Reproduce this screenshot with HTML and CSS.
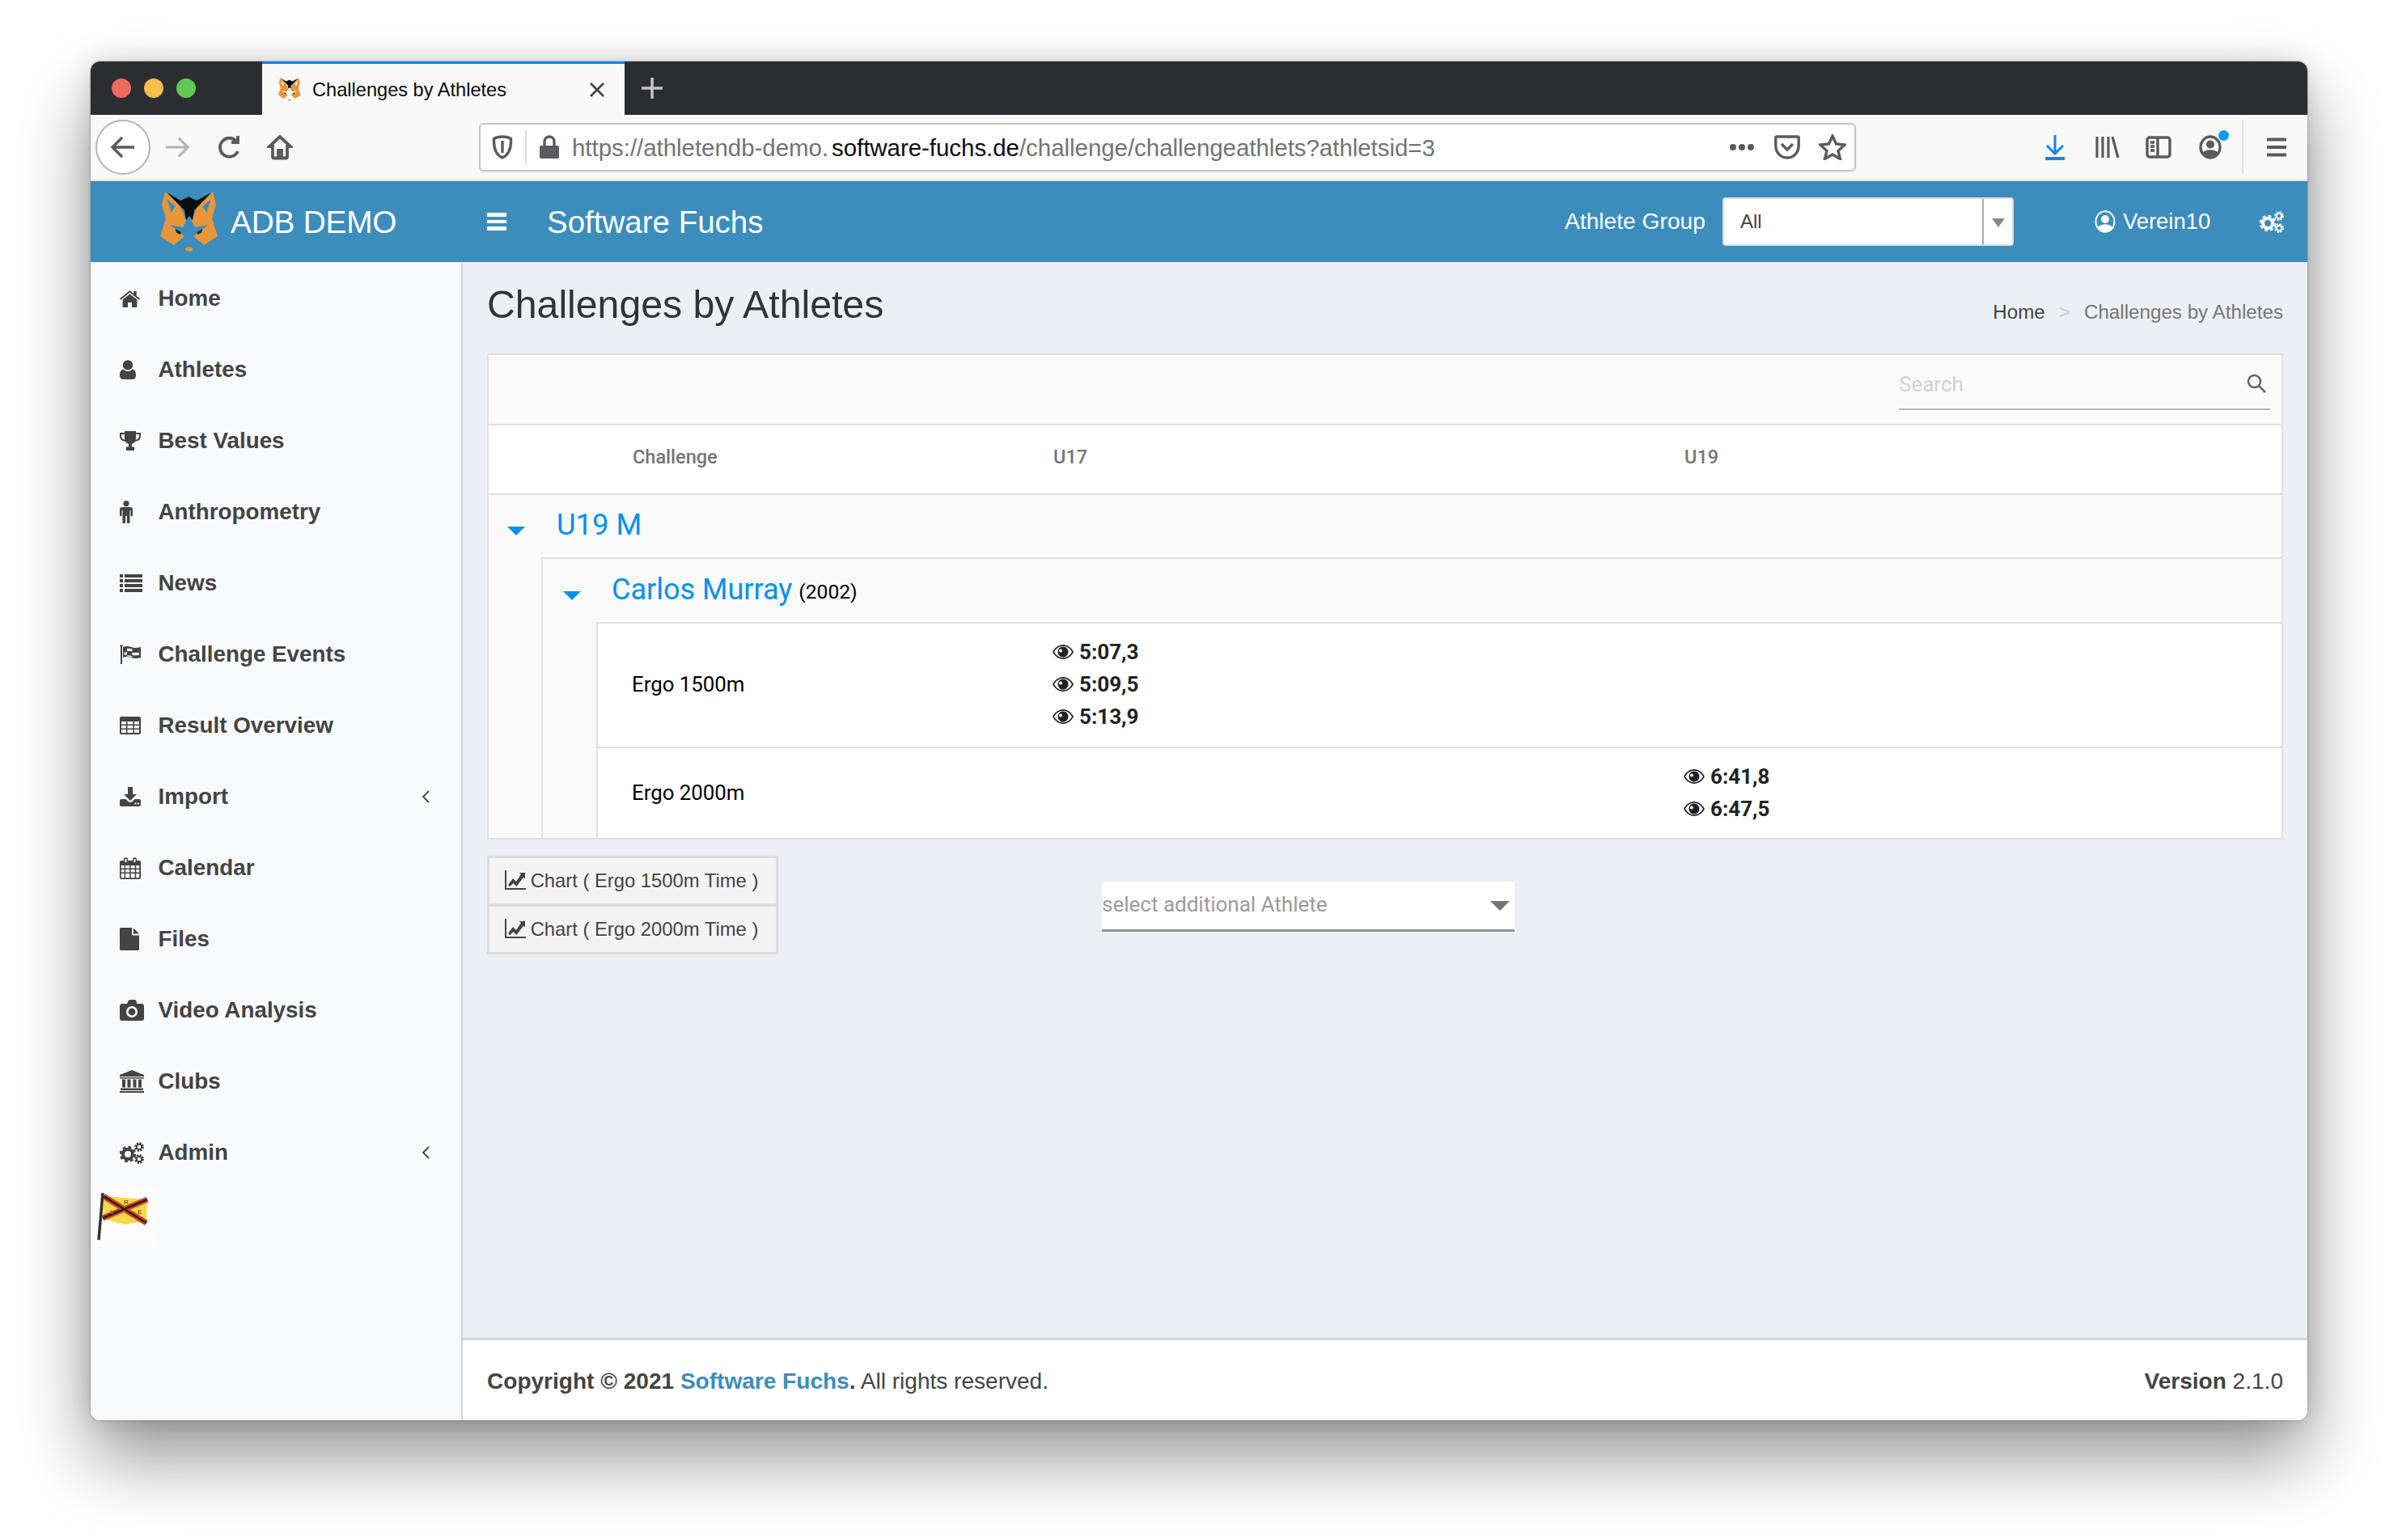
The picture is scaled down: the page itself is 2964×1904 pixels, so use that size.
FILE: index.html
```html
<!DOCTYPE html>
<html lang="en">
<head>
<meta charset="utf-8">
<title>Challenges by Athletes</title>
<link rel="stylesheet" href="styles.css">
</head>
<body>
<svg class="sprite" xmlns="http://www.w3.org/2000/svg">
  <symbol id="i-fox" viewBox="0 0 72 76">
    <path fill="#e8963a" fill-rule="evenodd" d="M6 0 L25 18 L32 36 L28 44 L12 41 L30 55 L17 66 L0 55 L7 33 L2 16Z M8.700 9.700 L13.700 26 L18.700 18Z"/>
    <path fill="#e8963a" fill-rule="evenodd" d="M65 0 L46 18 L39 36 L43 44 L59 41 L41 55 L54 66 L71 55 L64 33 L69 16Z M62.300 9.700 L57.300 26 L52.300 18Z"/>
    <path fill="#0c0c0c" d="M8.700 1.300 L25 11 L35.300 6.300 L45 11 L63 1.300 L42 23 L40 35 L36 30 L32 35 L30 23Z"/>
    <path fill="#12283a" d="M18.500 46 L26 50 L24.500 53 L20 50.500Z M52.500 46 L45 50 L46.500 53 L51 50.500Z"/>
    <ellipse cx="35.500" cy="71" rx="4.500" ry="2.600" fill="#e8963a"/>
  </symbol>
  <symbol id="i-home" viewBox="0 0 25 21">
    <path d="M12.5 0 L0 10.2 l1.3 1.5 L12.5 2.6 l11.2 9.1 1.3-1.5 -4.3-3.5V1h-3.4v2.9z"/>
    <path d="M12.5 4.4 L3.6 11.6V21h6.4v-6h5v6h6.4v-9.4z"/>
  </symbol>
  <symbol id="i-user" viewBox="0 0 20 24">
    <circle cx="10" cy="6.4" r="6.2"/>
    <path d="M4.6 11.4 C6 13 8 14 10 14 s4-1 5.4-2.6 C18.400 11.8 20 14.500 20 19 c0 3.300-1.800 5-4 5 H4 C1.800 24 0 22.300 0 19 0 14.500 1.600 11.800 4.600 11.400z"/>
  </symbol>
  <symbol id="i-trophy" viewBox="0 0 26 24">
    <path d="M6 0h14v9c0 3.600-2.200 6-5 7v3.500h3V24H8v-4.500h3V16c-2.800-1-5-3.400-5-7z"/>
    <path fill="none" stroke="currentColor" stroke-width="2" d="M6 3H1v3c0 3 2.500 5.500 6.500 6 M20 3h5v3c0 3-2.500 5.500-6.500 6"/>
  </symbol>
  <symbol id="i-male" viewBox="0 0 16 28">
    <circle cx="8" cy="3.600" r="3.600"/>
    <path d="M3 8h10c1.700 0 3 1.300 3 3v7c0 1.800-2.500 1.800-2.500 0v-6H12.500v15c0 1.800-3.600 1.800-3.600 0V19H7.100v8c0 1.800-3.600 1.800-3.600 0V12H2.500v6c0 1.800-2.500 1.800-2.500 0v-7c0-1.700 1.300-3 3-3z"/>
  </symbol>
  <symbol id="i-list" viewBox="0 0 28 22">
    <path d="M0 0h4v4H0zM6 0h22v4H6zM0 6h4v4H0zM6 6h22v4H6zM0 12h4v4H0zM6 12h22v4H6zM0 18h4v4H0zM6 18h22v4H6z"/>
  </symbol>
  <symbol id="i-flag" viewBox="0 0 27 24">
    <circle cx="2" cy="1.600" r="1.600"/>
    <rect x="1" y="1" width="2" height="23"/>
    <path d="M4 3 Q9 1 14 3 T26 3 V16 Q20 18 14 16 T4 16Z"/>
    <path fill="#f9fafc" d="M9 5 Q12 4.500 15.500 5.500 V8.500 Q12 7.500 9 8z M5.500 9.500 Q7 9 9 9.200 V12.500 Q7 12.300 5.500 12.800z M15.500 9.700 Q20 10.500 24 9.500 V12.800 Q20 13.800 15.500 13z M9 13.400 Q12 13.200 15.500 14.200 V15.400 Q12 14.400 9 14.800z"/>
  </symbol>
  <symbol id="i-table" viewBox="0 0 26 22">
    <path fill-rule="evenodd" d="M2 0h22c1.100 0 2 .9 2 2v18c0 1.100-.9 2-2 2H2c-1.100 0-2-.9-2-2V2C0 .9.900 0 2 0z M2 6v3.500h6V6z M9.500 6v3.500h7V6z M18 6v3.500h6V6z M2 11v3.500h6V11z M9.500 11v3.500h7V11z M18 11v3.500h6V11z M2 16v4h6v-4z M9.500 16v4h7v-4z M18 16v4h6v-4z"/>
  </symbol>
  <symbol id="i-import" viewBox="0 0 26 24">
    <path d="M10 0h6v9h5l-8 8-8-8h5z"/>
    <path fill-rule="evenodd" d="M2 15h5.500l3 3c1.500 1.300 3.500 1.300 5 0l3-3H24c1.100 0 2 .9 2 2v5c0 1.100-.9 2-2 2H2c-1.100 0-2-.9-2-2v-5c0-1.100.9-2 2-2z M18.500 19.500v2h2v-2z M22 19.500v2h2v-2z"/>
  </symbol>
  <symbol id="i-cal" viewBox="0 0 26 27">
    <path fill-rule="evenodd" d="M2 4h3V2c0-2.500 5-2.500 5 0v2h6V2c0-2.500 5-2.500 5 0v2h3c1.100 0 2 .9 2 2v19c0 1.100-.9 2-2 2H2c-1.100 0-2-.9-2-2V6c0-1.100.9-2 2-2z M6.500 2v4h2V2z M17.500 2v4h2V2z M1.700 10v3.500h4V10z M7 10v3.500h5.200V10z M13.700 10v3.500h5V10z M20.200 10v3.500h4V10z M1.700 15v3.500h4V15z M7 15v3.500h5.200V15z M13.700 15v3.500h5V15z M20.200 15v3.500h4V15z M1.700 20v5.200h4V20z M7 20v5.200h5.200V20z M13.700 20v5.200h5V20z M20.200 20v5.200h4V20z"/>
  </symbol>
  <symbol id="i-file" viewBox="0 0 24 28">
    <path d="M1.500 0H15v8c0 .8.700 1.500 1.500 1.500H24V26.500c0 .8-.7 1.500-1.500 1.500H1.500C.7 28 0 27.300 0 26.500V1.500C0 .7.700 0 1.500 0z M17 0.500l7 7h-7z"/>
  </symbol>
  <symbol id="i-cam" viewBox="0 0 30 26">
    <path fill-rule="evenodd" d="M3 5h6l1.300-3c.5-1 1.200-2 2.700-2h5c1.500 0 2.200 1 2.700 2L21 5h6c1.700 0 3 1.300 3 3v15c0 1.700-1.300 3-3 3H3c-1.700 0-3-1.300-3-3V8c0-1.700 1.300-3 3-3z M15 8a7 7 0 1 0 .01 0z"/>
    <circle cx="15" cy="15" r="4.400"/>
  </symbol>
  <symbol id="i-bank" viewBox="0 0 30 28">
    <path d="M15 0L30 6v2H0V6z M0 9h30v1.500H0z M3 11.500h4v10H3z M9.500 11.500h4v10h-4z M16.500 11.500h4v10h-4z M23 11.500h4v10h-4z M1 22.500h28V25H1z M0 26h30v2H0z"/>
  </symbol>
  <symbol id="i-gears" viewBox="0 0 30 27">
    <g fill="none" stroke="currentColor">
      <circle cx="10" cy="15" r="6" stroke-width="4"/>
      <circle cx="10" cy="15" r="8.500" stroke-width="3.600" stroke-dasharray="3.700 3"/>
      <circle cx="24" cy="6" r="3.200" stroke-width="2"/>
      <circle cx="24" cy="6" r="4.800" stroke-width="2.200" stroke-dasharray="2.200 1.570"/>
      <circle cx="24" cy="21" r="3.200" stroke-width="2"/>
      <circle cx="24" cy="21" r="4.800" stroke-width="2.200" stroke-dasharray="2.200 1.570"/>
    </g>
  </symbol>
  <symbol id="i-eye" viewBox="0 0 26 20">
    <path fill-rule="evenodd" d="M13 1C7.500 1 3 4.500 0 10c3 5.500 7.500 9 13 9s10-3.500 13-9c-3-5.500-7.500-9-13-9z M13 2.700c-5 0-8.500 3-11 7.300 2.500 4.300 6 7.300 11 7.300s8.500-3 11-7.300c-2.500-4.300-6-7.300-11-7.300z"/>
    <path fill-rule="evenodd" d="M13 3.500a6.500 6.500 0 1 0 .01 0z M10 6.500a2 2 0 1 0 .01 0z"/>
  </symbol>
  <symbol id="i-chart" viewBox="0 0 26 24">
    <path d="M0 0h2v22h24v2H0z"/>
    <path d="M4 18l6-8 4 4 6-9-2.500-2H25v7.500l-2-2-8.500 11.500-4-4L6 20z"/>
  </symbol>
</svg>

<div class="window">
  <div class="tabstrip">
    <div class="lights">
      <span class="light red"></span><span class="light yellow"></span><span class="light green"></span>
    </div>
    <div class="tab">
      <svg class="tab-fav"><use href="#i-fox"/></svg>
      <span class="tab-title">Challenges by Athletes</span>
      <svg class="tab-close" viewBox="0 0 20 20"><path d="M2 2l16 16M18 2L2 18"/></svg>
    </div>
    <svg class="tab-new" viewBox="0 0 28 28"><path d="M14 1v26M1 14h26"/></svg>
  </div>

  <div class="navbar">
    <div class="nav-back">
      <svg class="nav-ic" viewBox="0 0 36 36"><path d="M32 18H6M17 6L5 18l12 12"/></svg>
    </div>
    <svg class="nav-ic fwd" viewBox="0 0 36 36"><path d="M3 18h28M20 6l12 12-12 12"/></svg>
    <svg class="nav-ic reload" viewBox="0 0 32 32"><path d="M26 21a11.500 11.500 0 1 1-2-12.500M26 2v8h-8"/></svg>
    <svg class="nav-ic house" viewBox="0 0 32 32"><path d="M16 3L3 15h4v13c0 1 .5 1.500 1.500 1.500h15c1 0 1.500-.5 1.500-1.500V15h4z M14 29.500V20h4v9.500"/></svg>
    <div class="urlbar">
      <svg class="url-shield" viewBox="0 0 26 30"><path d="M13 2C9 2 5 3 2.500 4.500 2 14 4 24 13 28c9-4 11-14 10.500-23.500C21 3 17 2 13 2z"/><path d="M13 7v15"/></svg>
      <span class="url-sep"></span>
      <svg class="url-lock" viewBox="0 0 26 30"><path class="solid" d="M3 13h20c1.200 0 2 .8 2 2v12c0 1.200-.8 2-2 2H3c-1.200 0-2-.8-2-2V15c0-1.200.8-2 2-2z"/><path d="M7 13V8c0-8 12-8 12 0v5"/></svg>
      <span class="url-text">https://athletendb-demo.<b>software-fuchs.de</b>/challenge/challengeathlets?athletsid=3</span>
      <span class="url-dots"><i></i><i></i><i></i></span>
      <svg class="url-pocket" viewBox="0 0 32 30"><path d="M3 2h26c.8 0 1.200.5 1.200 1.200V13C30 22 24 28 16 28S2 22 1.800 13V3.200C1.800 2.500 2.200 2 3 2z"/><path d="M9 11l7 7 7-7"/></svg>
      <svg class="url-star" viewBox="0 0 34 32"><path d="M17 2l4.500 10 10.500 1-8 7.500 2.500 10L17 25l-9.500 5.500 2.500-10L2 13l10.500-1z"/></svg>
    </div>
    <svg class="tb-ic dl" viewBox="0 0 24 32"><path d="M12 1v22M2 14l10 10 10-10"/><path class="bar" d="M0 30h24"/></svg>
    <svg class="tb-ic lib" viewBox="0 0 30 30"><path d="M2 2v26M9 2v26M16 2v26M21 2l7 26"/></svg>
    <svg class="tb-ic side" viewBox="0 0 32 28"><rect x="2" y="2" width="28" height="24" rx="3"/><path d="M15 2v24M6 8h5M6 13h5M6 18h5"/></svg>
    <div class="tb-account">
      <svg class="tb-ic acc" viewBox="0 0 28 30"><ellipse cx="14" cy="15" rx="12" ry="13"/><circle class="solid" cx="14" cy="11.500" r="5"/><path class="solid" d="M5 22c2-5 16-5 18 0-4 6-14 6-18 0z"/></svg>
      <span class="tb-dot"></span>
    </div>
    <span class="tb-div"></span>
    <svg class="tb-ic burger" viewBox="0 0 24 24"><path d="M1 2.500h22M1 12h22M1 21.500h22"/></svg>
  </div>

  <header class="appbar">
    <svg class="app-logo"><use href="#i-fox"/></svg>
    <span class="app-name">ADB DEMO</span>
    <span class="app-burger"><i></i><i></i><i></i></span>
    <span class="app-org">Software Fuchs</span>
    <span class="app-label">Athlete Group</span>
    <div class="app-select">
      <span class="app-select-val">All</span>
      <span class="app-select-btn"></span>
    </div>
    <svg class="app-user-ic" viewBox="0 0 26 28"><ellipse cx="13" cy="14" rx="11.500" ry="12.800" fill="none" stroke="#fff" stroke-width="2"/><circle cx="13" cy="11" r="5" fill="#fff"/><path d="M4 21c3-5 15-5 18 0-4 7-14 7-18 0z" fill="#fff"/></svg>
    <span class="app-user">Verein10</span>
    <svg class="app-gears"><use href="#i-gears"/></svg>
  </header>

  <div class="body-row">
    <aside class="sidebar">
      <a class="side-item"><span class="side-ic"><svg width="25" height="21"><use href="#i-home"/></svg></span>Home</a>
      <a class="side-item"><span class="side-ic"><svg width="20" height="24"><use href="#i-user"/></svg></span>Athletes</a>
      <a class="side-item"><span class="side-ic"><svg width="26" height="24"><use href="#i-trophy"/></svg></span>Best Values</a>
      <a class="side-item"><span class="side-ic"><svg width="16" height="28"><use href="#i-male"/></svg></span>Anthropometry</a>
      <a class="side-item"><span class="side-ic"><svg width="28" height="22"><use href="#i-list"/></svg></span>News</a>
      <a class="side-item"><span class="side-ic"><svg width="27" height="24"><use href="#i-flag"/></svg></span>Challenge Events</a>
      <a class="side-item"><span class="side-ic"><svg width="26" height="22"><use href="#i-table"/></svg></span>Result Overview</a>
      <a class="side-item"><span class="side-ic"><svg width="26" height="24"><use href="#i-import"/></svg></span>Import<svg class="side-chev" viewBox="0 0 10 16"><path d="M9 1L2 8l7 7"/></svg></a>
      <a class="side-item"><span class="side-ic"><svg width="26" height="27"><use href="#i-cal"/></svg></span>Calendar</a>
      <a class="side-item"><span class="side-ic"><svg width="24" height="28"><use href="#i-file"/></svg></span>Files</a>
      <a class="side-item"><span class="side-ic"><svg width="30" height="26"><use href="#i-cam"/></svg></span>Video Analysis</a>
      <a class="side-item"><span class="side-ic"><svg width="30" height="28"><use href="#i-bank"/></svg></span>Clubs</a>
      <a class="side-item"><span class="side-ic"><svg width="30" height="27"><use href="#i-gears"/></svg></span>Admin<svg class="side-chev" viewBox="0 0 10 16"><path d="M9 1L2 8l7 7"/></svg></a>
      <svg class="club-flag" viewBox="0 0 77 73">
        <rect width="77" height="73" fill="#fdfdfe"/>
        <path d="M13 11 L67 15 L66 44 Q52 42 40 46 Q25 43 12 38z" fill="#f7d94a"/>
        <path d="M13 11L66 44" stroke="#d8401f" stroke-width="7" fill="none"/>
        <path d="M67 15L12 38" stroke="#d8401f" stroke-width="7" fill="none"/>
        <path d="M13 11L66 44M67 15L12 38" stroke="#222" stroke-width="2.500" fill="none"/>
        <path d="M12 7L7 65" stroke="#333" stroke-width="3.500" fill="none"/>
        <text class="flag-t" x="21" y="33">V</text><text class="flag-t" x="38" y="21">R</text><text class="flag-t" x="55" y="33">E</text>
      </svg>
    </aside>

    <main class="main">
      <div class="content">
        <div class="page-head">
          <h1 class="page-title">Challenges by Athletes</h1>
          <nav class="crumbs"><a>Home</a><span class="crumb-sep">&gt;</span><span class="crumb-cur">Challenges by Athletes</span></nav>
        </div>

        <section class="card">
          <div class="toolbar">
            <div class="search">
              <span class="search-ph">Search</span>
              <svg class="search-ic" viewBox="0 0 24 24"><circle cx="9.500" cy="9.500" r="7.500"/><path d="M15 15l8 8"/></svg>
            </div>
          </div>
          <div class="tr thead">
            <span>Challenge</span><span>U17</span><span>U19</span>
          </div>
          <div class="group">
            <div class="group-head">
              <span class="caret"></span><span class="group-name">U19 M</span>
            </div>
            <div class="nest">
              <div class="group-head inner">
                <span class="caret"></span><span class="group-name">Carlos Murray</span><span class="birth">(2002)</span>
              </div>
              <div class="nest inner-nest">
                <div class="tr row tall">
                  <span>Ergo 1500m</span>
                  <div class="results">
                    <div class="res"><svg width="26" height="20"><use href="#i-eye"/></svg>5:07,3</div>
                    <div class="res"><svg width="26" height="20"><use href="#i-eye"/></svg>5:09,5</div>
                    <div class="res"><svg width="26" height="20"><use href="#i-eye"/></svg>5:13,9</div>
                  </div>
                  <span></span>
                </div>
                <div class="tr row">
                  <span>Ergo 2000m</span>
                  <span></span>
                  <div class="results">
                    <div class="res"><svg width="26" height="20"><use href="#i-eye"/></svg>6:41,8</div>
                    <div class="res"><svg width="26" height="20"><use href="#i-eye"/></svg>6:47,5</div>
                  </div>
                </div>
              </div>
            </div>
          </div>
        </section>

        <div class="under">
          <div class="chart-btns">
            <a class="chart-btn"><svg width="26" height="24"><use href="#i-chart"/></svg>Chart ( Ergo 1500m Time )</a>
            <a class="chart-btn"><svg width="26" height="24"><use href="#i-chart"/></svg>Chart ( Ergo 2000m Time )</a>
          </div>
          <div class="athlete-select">
            <span class="athlete-ph">select additional Athlete</span>
            <span class="athlete-arrow"></span>
          </div>
        </div>
      </div>

      <footer class="footer">
        <span><b>Copyright &copy; 2021 <a class="foot-link">Software Fuchs</a>.</b> All rights reserved.</span>
        <span><b>Version</b> 2.1.0</span>
      </footer>
    </main>
  </div>
</div>
</body>
</html>
```
FILE: styles.css
```css
* { box-sizing: border-box; }
html, body { margin: 0; height: 100%; }
body {
  width: 2964px;
  height: 1904px;
  padding: 76px 0 0 112px;
  background: #fff;
  overflow: hidden;
  font-family: "Liberation Sans", Arial, sans-serif;
  color: #333;
}
.sprite { display: none; }
svg { display: block; flex: none; }
a { color: inherit; text-decoration: none; }

.window {
  width: 2740px;
  height: 1680px;
  border-radius: 12px;
  overflow: hidden;
  display: flex;
  flex-direction: column;
  box-shadow: 0 46px 90px rgba(0,0,0,.42), 0 0 30px rgba(0,0,0,.14), 0 0 2px rgba(0,0,0,.5);
}

/* tab strip */
.tabstrip {
  height: 66px;
  background: #2c2d31;
  display: flex;
  align-items: stretch;
  flex: none;
}
.lights { width: 212px; display: flex; align-items: center; padding-left: 26px; gap: 16px; padding-top: 0; }
.light { width: 24px; height: 24px; border-radius: 50%; }
.red { background: #ee6a5f; }
.yellow { background: #f5be4f; }
.green { background: #62c554; }
.tab {
  width: 448px;
  background: #f9f9fa;
  border-top: 3px solid #0a84ff;
  display: flex;
  align-items: center;
  padding-left: 20px;
  color: #0c0c0d;
}
.tab-fav { width: 28px; height: 30px; margin-right: 14px; }
.tab-title { font-size: 23.600px; flex: 1; padding-top: 2px; }
.tab-close { width: 20px; height: 20px; margin-right: 24px; fill: none; stroke: #444; stroke-width: 2.600; }
.tab-new { width: 28px; height: 28px; margin: 19px 0 0 20px; fill: none; stroke: #c6c6c8; stroke-width: 3.500; }

/* browser nav */
.navbar {
  height: 82px;
  background: #f9f9fa;
  border-bottom: 2px solid #e2e2e2;
  display: flex;
  align-items: center;
  flex: none;
  padding-left: 6px;
}
.nav-ic { fill: none; stroke: #5b5b5e; stroke-width: 3.400; }
.nav-back {
  width: 68px;
  height: 68px;
  border-radius: 50%;
  border: 2px solid #b4b4b4;
  background: #fff;
  display: flex;
  align-items: center;
  justify-content: center;
}
.nav-back .nav-ic { width: 36px; height: 36px; }
.fwd { width: 34px; height: 34px; margin-left: 16px; stroke: #b5b5b7; }
.reload { width: 32px; height: 32px; margin-left: 32px; stroke-width: 3.800; }
.house { width: 32px; height: 34px; margin-left: 30px; stroke-width: 3.800; }
.urlbar {
  width: 1702px;
  height: 60px;
  margin-left: 230px;
  background: #fff;
  border: 2px solid #c4c4c4;
  border-radius: 6px;
  display: flex;
  align-items: center;
  padding-left: 15px;
  box-shadow: 0 1px 3px rgba(0,0,0,.08);
}
.url-shield { width: 26px; height: 30px; margin-left: -1px; fill: none; stroke: #5b5b5e; stroke-width: 3.400; }
.url-sep { width: 2px; height: 42px; background: #dcdcdc; margin-left: 15px; }
.url-lock { width: 26px; height: 30px; margin-left: 15px; fill: none; stroke: #5b5b5e; stroke-width: 3.400; }
.url-lock .solid { fill: #5b5b5e; stroke: none; }
.url-text { font-size: 29.400px; color: #737373; margin-left: 15px; width: 1431px; white-space: nowrap; padding-top: 2px; }
.url-text b { font-weight: 400; color: #0c0c0d; margin-left: 4px; }
.url-dots { display: flex; gap: 3px; width: 32px; }
.url-dots i { width: 8px; height: 8px; border-radius: 50%; background: #5b5b5e; }
.url-pocket { width: 32px; height: 30px; margin-left: 23px; fill: none; stroke: #5b5b5e; stroke-width: 3.400; }
.url-star { width: 34px; height: 32px; margin-left: 23px; fill: none; stroke: #5b5b5e; stroke-width: 3.400; }
.tb-ic { fill: none; stroke: #5b5b5e; stroke-width: 3.400; }
.dl { width: 24px; height: 32px; margin-left: 234px; stroke: #0a84ff; stroke-width: 3; }
.dl .bar { stroke-width: 4; }
.lib { width: 30px; height: 30px; margin-left: 38px; stroke-width: 3.200; }
.side { width: 32px; height: 28px; margin-left: 32px; }
.tb-account { position: relative; margin-left: 34px; }
.acc { width: 28px; height: 30px; }
.acc .solid { fill: #5b5b5e; stroke: none; }
.tb-dot { position: absolute; right: -9px; top: -6px; width: 13px; height: 13px; border-radius: 50%; background: #0a9cf0; }
.tb-div { width: 2px; height: 68px; background: #e2e2e2; margin-left: 25px; }
.burger { width: 24px; height: 24px; margin-left: 29px; stroke-width: 4; stroke-linecap: round; }

/* app header */
.appbar {
  height: 100px;
  background: #3c8dbc;
  color: #fff;
  display: flex;
  align-items: center;
  padding-left: 86px;
  flex: none;
}
.app-logo { width: 72px; height: 76px; margin-top: 2px; }
.app-name { font-size: 38.800px; letter-spacing: -.2px; margin-left: 15px; width: 317px; padding-top: 2px; }
.app-burger { width: 24px; display: flex; flex-direction: column; gap: 4px; }
.app-burger i { height: 4.500px; background: #fff; display: block; }
.app-org { font-size: 38.500px; margin-left: 50px; width: 1258px; padding-top: 2px; }
.app-label { font-size: 28.200px; width: 195px; margin-top: -2px; }
.app-select {
  width: 360px;
  height: 60px;
  background: #fff;
  border: 2px solid #ddd;
  border-radius: 4px;
  display: flex;
  align-items: stretch;
  color: #444;
}
.app-select-val { font-size: 24px; flex: 1; padding-left: 20px; line-height: 56px; }
.app-select-btn { width: 37px; border-left: 2px solid #aaa; position: relative; }
.app-select-btn::after {
  content: "";
  position: absolute;
  left: 10px;
  top: 24px;
  border: 8px solid transparent;
  border-top: 11px solid #888;
  border-bottom: 0;
}
.app-user-ic { width: 26px; height: 28px; margin-left: 100px; }
.app-user { font-size: 27.400px; margin-left: 9px; width: 169px; }
.app-gears { width: 30px; height: 27px; }

/* layout */
.body-row { flex: 1; display: flex; min-height: 0; }
.sidebar {
  width: 460px;
  background: #f9fafc;
  border-right: 2px solid #d2d6de;
  flex: none;
}
.side-item {
  height: 88px;
  display: flex;
  align-items: center;
  padding: 2px 0 0 36px;
  font-size: 27.800px;
  font-weight: 700;
  color: #444;
}
.side-ic { width: 47.500px; display: flex; align-items: center; fill: #444; color: #444; }
.side-chev { width: 10px; height: 16px; margin-left: auto; margin-right: 39px; fill: none; stroke: #444; stroke-width: 1.800; }
.club-flag { width: 77px; height: 73px; margin-left: 3px; }
.flag-t { font-size: 8px; font-weight: 700; fill: #8a6a10; }

.main { flex: 1; display: flex; flex-direction: column; background: #ecf0f5; min-width: 0; }
.content { flex: 1; padding: 0 30px; }
.page-head { height: 113px; display: flex; justify-content: space-between; align-items: flex-start; }
.page-title { margin: 24px 0 0; font-size: 48.200px; font-weight: 400; line-height: 56px; color: #333; }
.crumbs { margin-top: 48px; font-size: 24.200px; line-height: 28px; display: flex; color: #444; }
.crumb-sep { color: #ccc; margin: 0 17px; }
.crumb-cur { color: #777; }

/* table card */
.card {
  border: 2px solid #e0e0e0;
  background: #fff;
  font-family: Roboto, sans-serif;
  height: 601px;
  overflow: hidden;
}
.toolbar {
  height: 85px;
  background: #fafafa;
  display: flex;
  justify-content: flex-end;
  padding: 0 14px 0 0;
}
.search {
  width: 459px;
  height: 68px;
  border-bottom: 2px solid #b5b5b5;
  display: flex;
  align-items: center;
  justify-content: space-between;
  padding: 8px 5px 0 0;
}
.search-ph { font-size: 26px; color: #d2d2d2; margin-top: -2px; }
.search-ic { width: 24px; height: 24px; fill: none; stroke: #666; stroke-width: 2.600; margin-top: -4px; }
.tr {
  display: grid;
  grid-template-columns: 520px 780px 1fr;
  align-items: center;
}
.thead {
  height: 86px;
  padding: 0 0 6px 178px;
  border-top: 2px solid #e0e0e0;
  font-size: 23.500px;
  font-weight: 500;
  color: #757575;
}
.group { background: #fafafa; border-top: 2px solid #e0e0e0; }
.group-head {
  height: 77px;
  display: flex;
  align-items: center;
  padding-left: 23px;
}
.caret {
  width: 0;
  height: 0;
  border: 11px solid transparent;
  border-top: 11px solid #0091ea;
  border-bottom: 0;
  margin-top: 12px;
}
.group-name { font-size: 36.400px; color: #0091ea; margin: 0 0 5px 39px; }
.nest { margin-left: 65px; border-left: 2px solid #e0e0e0; border-top: 2px solid #e0e0e0; }
.group-head.inner { height: 78px; padding-left: 25px; }
.inner .group-name { font-size: 36px; margin: 0 0 2px 38px; }
.birth { font-size: 24.600px; color: #000; margin: 2px 0 0 8px; }
.inner-nest { margin-left: 66px; background: #fff; }
.row { padding: 0 0 0 42px; font-size: 25.800px; color: #000; height: 114px; border-top: 2px solid #e0e0e0; }
.row:first-child { border-top: 0; }
.row > span { margin-top: -2px; }
.row .results { min-width: 0; }
.row.tall { height: 152px; }
.res {
  height: 40px;
  display: flex;
  align-items: center;
  gap: 7px;
  font-weight: 700;
  font-size: 26px;
  color: #212121;
  fill: #212121;
  position: relative;
  top: -1px;
}

/* under table */
.under { display: flex; align-items: flex-start; margin-top: 20px; }
.chart-btns { width: 360px; display: flex; flex-direction: column; }
.chart-btn {
  height: 62px;
  background: #f4f4f4;
  border: 3px solid #ddd;
  display: flex;
  align-items: center;
  justify-content: center;
  gap: 6px;
  font-size: 23.800px;
  color: #444;
  fill: #444;
}
.chart-btn + .chart-btn { margin-top: -2px; }
.chart-btn svg { margin: -2px 0 0 -3px; }
.athlete-select {
  width: 510px;
  height: 62px;
  margin: 32px 0 0 400px;
  background: #fff;
  border-bottom: 3px solid #949494;
  display: flex;
  align-items: center;
  justify-content: space-between;
  font-family: Roboto, sans-serif;
  font-size: 26px;
  color: #9b9b9b;
  padding-right: 6px;
}
.athlete-ph { margin-top: -3px; }
.athlete-arrow {
  border: 12px solid transparent;
  border-top: 12px solid #757575;
  border-bottom: 0;
}

.footer {
  height: 102px;
  flex: none;
  background: #fff;
  border-top: 3px solid #d2d6de;
  display: flex;
  justify-content: space-between;
  align-items: center;
  padding: 2px 30px 0;
  font-size: 28.050px;
  color: #444;
}
.foot-link { color: #3c8dbc; }
```
